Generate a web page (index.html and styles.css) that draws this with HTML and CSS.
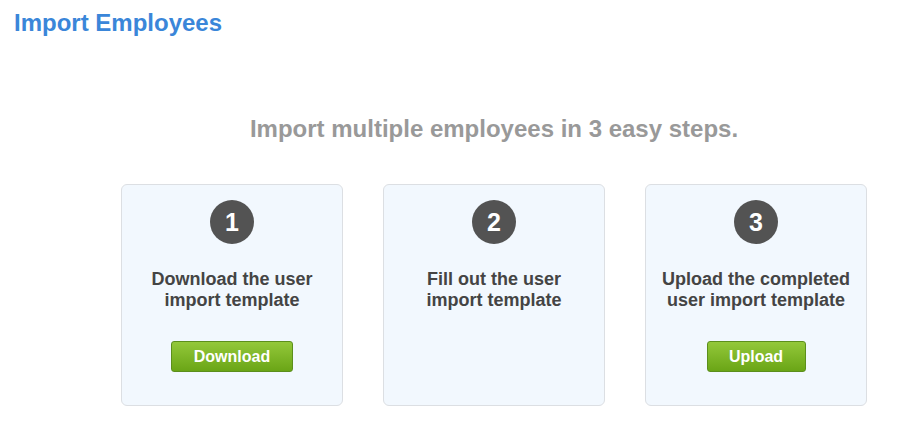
FILE: index.html
```html
<!DOCTYPE html>
<html lang="en">
<head>
   <meta charset="UTF-8">
   <title>Import Employees</title>
   <link rel="stylesheet" href="styles.css">
</head>
<body>
   <h1 class="page-title">Import Employees</h1>
   <div id="import">
      <h2 class="lead">Import multiple employees in 3 easy steps.</h2>
      <div class="steps">
         <div class="step">
            <span class="step-num">1</span>
            <p>Download the user<br>import template</p>
            <a class="btn" href="#">Download</a>
         </div>
         <div class="step">
            <span class="step-num">2</span>
            <p>Fill out the user<br>import template</p>
         </div>
         <div class="step">
            <span class="step-num">3</span>
            <p>Upload the completed<br>user import template</p>
            <a class="btn btn-upload" href="#">Upload</a>
         </div>
      </div>
   </div>
</body>
</html>
```

FILE: styles.css
```css
body {
   margin: 0;
   padding: 8px 14px;
   background: #ffffff;
   font-family: "Liberation Sans", Arial, sans-serif;
}

.page-title {
   margin: 0;
   font-size: 24px;
   line-height: 30px;
   font-weight: 700;
   color: #3a86d9;
}

#import {
   margin-left: 107px;
   width: 746px;
}

.lead {
   margin: 76px 0 0;
   text-align: center;
   font-size: 24px;
   line-height: 30px;
   font-weight: 700;
   color: #999999;
}

.steps {
   display: flex;
   gap: 40px;
   margin-top: 40px;
}

.step {
   box-sizing: border-box;
   width: 222px;
   height: 222px;
   padding-top: 15px;
   border: 1px solid #dcdfe3;
   border-radius: 6px;
   background: #f2f8fe;
   display: flex;
   flex-direction: column;
   align-items: center;
}

.step-num {
   width: 44px;
   height: 44px;
   border-radius: 50%;
   background: #535353;
   color: #ffffff;
   font-size: 25px;
   font-weight: 700;
   display: flex;
   justify-content: center;
   align-items: center;
}

.step p {
   margin: 25px 0 0;
   text-align: center;
   font-size: 18px;
   line-height: 21px;
   font-weight: 700;
   color: #444444;
}

.btn {
   box-sizing: border-box;
   margin-top: 30px;
   width: 122px;
   height: 31px;
   border: 1px solid #5c8f1c;
   border-radius: 3px;
   background: linear-gradient(#93c83a, #6aa516);
   color: #ffffff;
   font-size: 16px;
   font-weight: 700;
   text-decoration: none;
   display: flex;
   justify-content: center;
   align-items: center;
}

.btn-upload {
   width: 99px;
}
```
